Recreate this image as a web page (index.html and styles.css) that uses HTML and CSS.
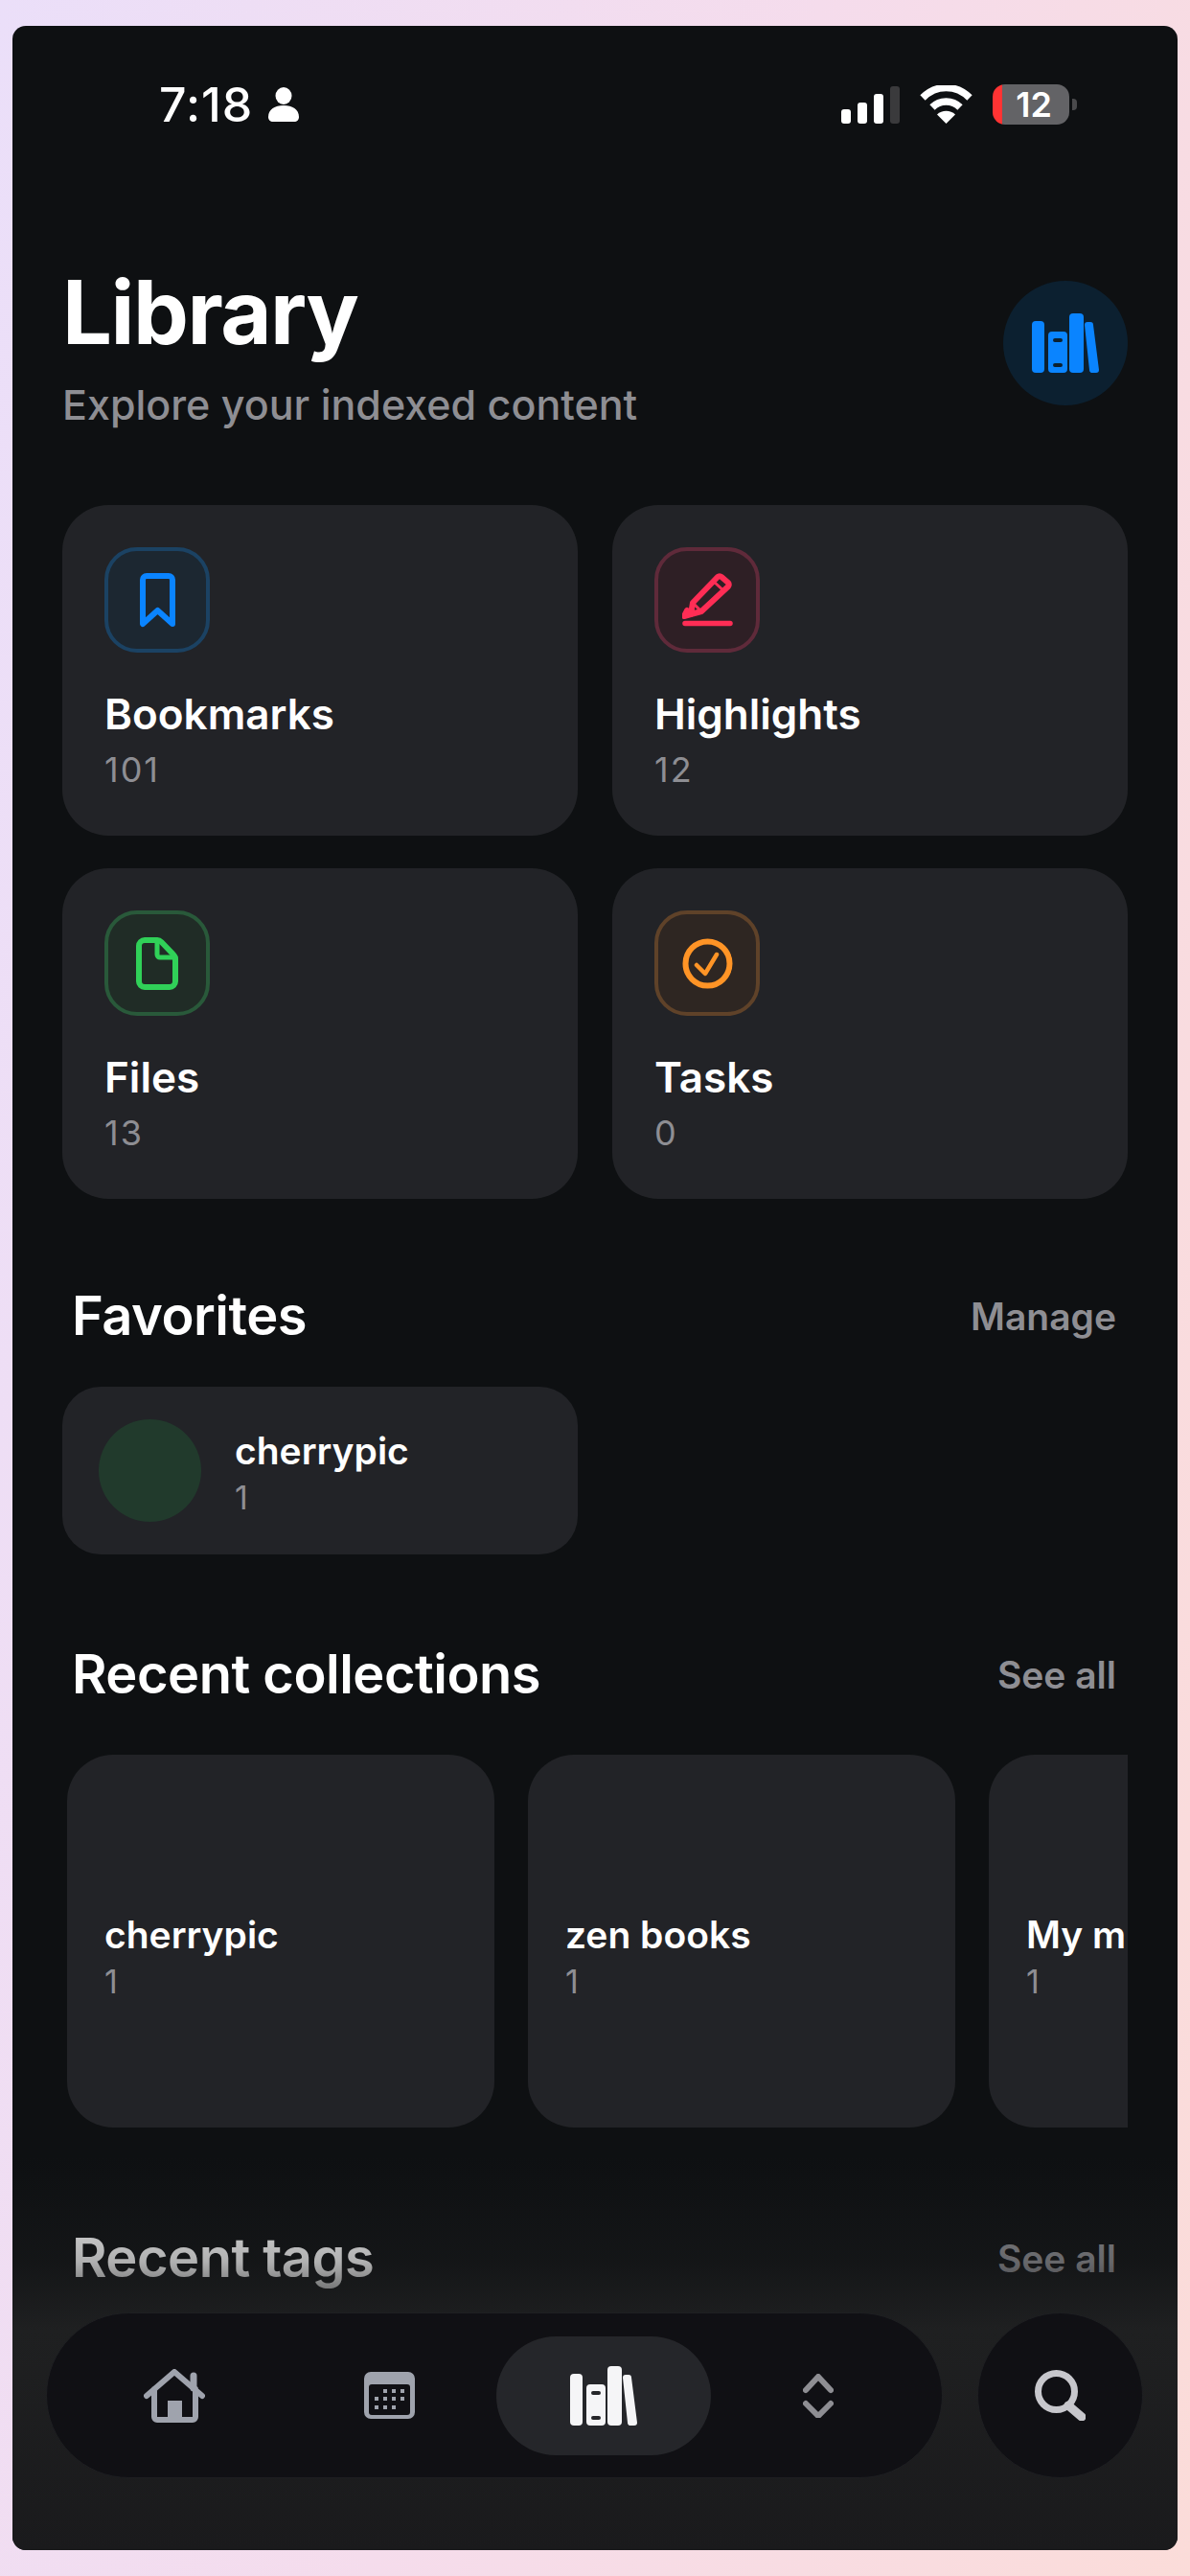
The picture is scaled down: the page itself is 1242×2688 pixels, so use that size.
FILE: index.html
```html
<!DOCTYPE html>
<html lang="en">
<head>
  <meta charset="UTF-8">
  <meta name="viewport" content="width=device-width, initial-scale=1.0">
  <title>Library</title>
  <link rel="stylesheet" href="styles.css">
</head>
<body>
  <div class="phone">

    <div class="status-bar">
      <div class="status-left">
        <span class="clock">7:18</span>
        <svg class="person" viewBox="0 0 34 36"><ellipse cx="17" cy="9" rx="8.5" ry="9"/><path d="M1 31c0-8 7-12 16-12s16 4 16 12c0 3-2 5-5 5H6c-3 0-5-2-5-5z"/></svg>
      </div>
      <div class="status-right">
        <svg class="signal" viewBox="0 0 61 39">
          <rect x="0" y="24" width="10" height="15" rx="3"/>
          <rect x="17" y="17" width="10" height="22" rx="3"/>
          <rect x="34" y="8" width="10" height="31" rx="3"/>
          <rect class="signal-off" x="51" y="0" width="10" height="39" rx="3"/>
        </svg>
        <svg class="wifi" viewBox="0 0 55 40">
          <path class="wifi-arc" d="M3 13C17-1 38-1 52 13"/>
          <path class="wifi-arc" d="M13 23C21 15 34 15 42 23"/>
          <path d="M27.5 40L18 30.500C23 25.500 32 25.500 37 30.500Z"/>
        </svg>
        <div class="battery">
          <div class="battery-body"><span class="battery-num">12</span></div>
          <div class="battery-nub"></div>
        </div>
      </div>
    </div>

    <div class="content">
      <div class="page-head">
        <div>
          <h1>Library</h1>
          <p class="subtitle">Explore your indexed content</p>
        </div>
        <div class="head-badge">
          <svg class="books" viewBox="0 0 70 62"><use href="#books"/></svg>
        </div>
      </div>

      <div class="stat-grid">
        <div class="stat-card">
          <div class="tile tile-blue">
            <svg class="bookmark-icon" viewBox="0 0 37 57"><path d="M3 53V7a4 4 0 0 1 4-4h23a4 4 0 0 1 4 4v46L18.500 39z"/></svg>
          </div>
          <div class="stat-title">Bookmarks</div>
          <div class="stat-count">101</div>
        </div>
        <div class="stat-card">
          <div class="tile tile-red">
            <svg class="pen-icon" viewBox="0 0 53 56">
              <path d="M37 4a3 3 0 0 1 4 0l7 6a3 3 0 0 1 0 4L20 40l-11 3 2-12z"/>
              <path d="M33 9l11 10M11 31l9 9" stroke-width="3"/>
              <path d="M2 45l7-2-4-4z"/>
              <path d="M3 52.500h47" stroke-width="5.500"/>
            </svg>
          </div>
          <div class="stat-title">Highlights</div>
          <div class="stat-count">12</div>
        </div>
        <div class="stat-card">
          <div class="tile tile-green">
            <svg class="file-icon" viewBox="0 0 44 55">
              <path d="M9 3h13c2 0 3 .5 4.500 2L38 17c2 2 3 3 3 5v24a6 6 0 0 1-6 6H9a6 6 0 0 1-6-6V9a6 6 0 0 1 6-6z"/>
              <path d="M22 3v15a3 3 0 0 0 3 3h16" stroke-width="5"/>
            </svg>
          </div>
          <div class="stat-title">Files</div>
          <div class="stat-count">13</div>
        </div>
        <div class="stat-card">
          <div class="tile tile-orange">
            <svg class="task-icon" viewBox="0 0 53 53">
              <circle cx="26.500" cy="26.500" r="23"/>
              <path d="M15 28l9 9 12-20" stroke-width="4.500"/>
            </svg>
          </div>
          <div class="stat-title">Tasks</div>
          <div class="stat-count">0</div>
        </div>
      </div>

      <div class="section-head section-favorites">
        <h2>Favorites</h2>
        <span class="section-link">Manage</span>
      </div>
      <div class="fav-card">
        <div class="fav-dot"></div>
        <div class="fav-text">
          <div class="item-name">cherrypic</div>
          <div class="item-count">1</div>
        </div>
      </div>

      <div class="section-head section-collections">
        <h2>Recent collections</h2>
        <span class="section-link">See all</span>
      </div>
      <div class="collection-row">
        <div class="collection-card">
          <div class="item-name">cherrypic</div>
          <div class="item-count">1</div>
        </div>
        <div class="collection-card">
          <div class="item-name">zen books</div>
          <div class="item-count">1</div>
        </div>
        <div class="collection-card">
          <div class="item-name">My mu</div>
          <div class="item-count">1</div>
        </div>
      </div>

      <div class="section-head section-tags">
        <h2>Recent tags</h2>
        <span class="section-link">See all</span>
      </div>
    </div>

    <!-- floating tab bar sits over the scrolled content -->
    <div class="dock">
      <div class="tab-bar">
        <div class="tab">
          <svg class="home-icon" viewBox="0 0 64 56">
            <path d="M3 28L32 3l29 25M11 21v29a3 3 0 0 0 3 3h37a3 3 0 0 0 3-3V21"/>
            <path d="M52 7v13" stroke-width="7"/>
            <rect class="icon-fill" x="25" y="33" width="15" height="20"/>
          </svg>
        </div>
        <div class="tab">
          <svg class="calendar-icon" viewBox="0 0 53 49">
            <path fill-rule="evenodd" d="M7 0h39a7 7 0 0 1 7 7v35a7 7 0 0 1-7 7H7a7 7 0 0 1-7-7V7a7 7 0 0 1 7-7zM8 13a3 3 0 0 0-3 3v26a3 3 0 0 0 3 3h37a3 3 0 0 0 3-3V16a3 3 0 0 0-3-3z"/>
            <rect x="20" y="18" width="4" height="4"/><rect x="29" y="18" width="4" height="4"/><rect x="38" y="18" width="4" height="4"/>
            <rect x="11" y="26" width="4" height="4"/><rect x="20" y="26" width="4" height="4"/><rect x="29" y="26" width="4" height="4"/><rect x="38" y="26" width="4" height="4"/>
            <rect x="11" y="35" width="4" height="4"/><rect x="20" y="35" width="4" height="4"/><rect x="29" y="35" width="4" height="4"/>
          </svg>
        </div>
        <div class="tab tab-active">
          <svg class="books" viewBox="0 0 70 62"><use href="#books"/></svg>
        </div>
        <div class="tab">
          <svg class="chevrons-icon" viewBox="0 0 32 46">
            <path d="M3 17L16 3l13 14M3 31l13 13 13-13"/>
          </svg>
        </div>
      </div>
      <div class="search-btn">
        <svg class="search-icon" viewBox="0 0 53 53">
          <circle cx="22.500" cy="22.500" r="19"/>
          <path d="M35 37l14 12" stroke-width="9"/>
        </svg>
      </div>
    </div>
  </div>

  <svg class="sprites" width="0" height="0">
    <symbol id="books" viewBox="0 0 70 62">
      <rect x="0" y="8" width="13" height="54" rx="4"/>
      <path fill-rule="evenodd" d="M21 19h12a4 4 0 0 1 4 4v35a4 4 0 0 1-4 4H21a4 4 0 0 1-4-4V23a4 4 0 0 1 4-4zM24 26a2 2 0 0 0 0 4h6a2 2 0 0 0 0-4zM24 52a2 2 0 0 0 0 4h6a2 2 0 0 0 0-4z"/>
      <rect x="39" y="0" width="15" height="62" rx="4"/>
      <path d="M55 12a3 3 0 0 1 3-3h3a3 3 0 0 1 3 3l6 47a3 3 0 0 1-3 3h-3a3 3 0 0 1-4-3z"/>
    </symbol>
  </svg>
</body>
</html>
```
FILE: styles.css
```css
* {
    box-sizing: border-box;
}

body {
    margin: 0;
    width: 1242px;
    height: 2688px;
    padding: 27px 13px;
    overflow: hidden;
    font-family: Inter, "Noto Sans", sans-serif;
    background: linear-gradient(100deg, #ebdff9 0%, #f5dcec 50%, #fbdcd9 100%);
}

.phone {
    position: relative;
    height: 2634px;
    border-radius: 14px;
    overflow: hidden;
    background-color: #0e1012;
    color: #fff;
}

.sprites {
    position: absolute;
}

/* status bar */
.status-bar {
    display: flex;
    justify-content: space-between;
    align-items: center;
    height: 42px;
    margin-top: 61px;
    padding: 0 105px 0 153px;
}

.status-left {
    display: flex;
    align-items: center;
    gap: 15px;
}

.clock {
    font-size: 50px;
    font-weight: 500;
    line-height: 42px;
    letter-spacing: 1px;
}

.person {
    width: 34px;
    height: 36px;
    fill: #fff;
}

.status-right {
    display: flex;
    align-items: center;
    gap: 21px;
}

.signal {
    width: 61px;
    height: 39px;
    fill: #fff;
}

.signal-off {
    fill: #3a3a3c;
}

.wifi {
    width: 55px;
    height: 40px;
    fill: #fff;
}

.wifi-arc {
    fill: none;
    stroke: #fff;
    stroke-width: 7.5;
}

.battery {
    display: flex;
    align-items: center;
    gap: 3px;
}

.battery-body {
    width: 80px;
    height: 42px;
    border-radius: 13px;
    overflow: hidden;
    background: linear-gradient(90deg, #ff3333 10px, #636366 10px);
    text-align: center;
    padding-left: 6px;
}

.battery-num {
    font-size: 36px;
    font-weight: 600;
    line-height: 42px;
}

.battery-nub {
    width: 5px;
    height: 12px;
    border-radius: 0 4px 4px 0;
    background-color: #4a4a4c;
}

/* page header */
.content {
    padding: 0 52px;
}

.page-head {
    display: flex;
    justify-content: space-between;
    align-items: flex-start;
    margin-top: 140px;
}

h1 {
    margin: 0;
    font-size: 92px;
    font-weight: 700;
    line-height: 112px;
    letter-spacing: -1.5px;
}

.subtitle {
    margin: 16px 0 0;
    font-size: 43px;
    font-weight: 500;
    line-height: 48px;
    color: #8e8e93;
}

.head-badge {
    display: flex;
    justify-content: center;
    align-items: center;
    width: 130px;
    height: 130px;
    margin-top: 23px;
    border-radius: 50%;
    background-color: #0c2030;
    color: #0a84ff;
}

.books {
    width: 70px;
    height: 62px;
    fill: currentColor;
}

/* stat cards */
.stat-grid {
    display: grid;
    grid-template-columns: 538px 538px;
    grid-auto-rows: 345px;
    gap: 34px 36px;
    margin-top: 81px;
}

.stat-card {
    padding: 44px 44px 0;
    border-radius: 48px;
    background-color: #222327;
}

.tile {
    display: flex;
    justify-content: center;
    align-items: center;
    width: 110px;
    height: 110px;
    border: 4px solid;
    border-radius: 34px;
}

.tile svg {
    fill: none;
    stroke: currentColor;
    stroke-width: 6;
    stroke-linecap: round;
    stroke-linejoin: round;
}

.tile-blue {
    color: #0a84ff;
    border-color: #1b4263;
    background-color: #1c2731;
}

.tile-red {
    color: #ff2d55;
    border-color: #5f2a3a;
    background-color: #2e1f25;
}

.tile-green {
    color: #30d158;
    border-color: #29593a;
    background-color: #202c26;
}

.tile-orange {
    color: #ff9426;
    border-color: #5f4229;
    background-color: #2e2622;
}

.bookmark-icon {
    width: 37px;
    height: 57px;
}

.pen-icon {
    width: 53px;
    height: 56px;
}

.file-icon {
    width: 44px;
    height: 55px;
}

.task-icon {
    width: 53px;
    height: 53px;
}

.stat-title {
    margin-top: 38px;
    font-size: 44px;
    font-weight: 600;
    line-height: 52px;
}

.stat-count {
    margin-top: 9px;
    font-size: 36px;
    line-height: 46px;
    letter-spacing: 2px;
    color: #8e8e93;
}

/* sections */
.section-head {
    display: flex;
    justify-content: space-between;
    align-items: center;
    padding: 0 12px 0 10px;
}

h2 {
    margin: 0;
    font-size: 56px;
    font-weight: 600;
    line-height: 64px;
    letter-spacing: -.5px;
}

.section-link {
    font-size: 39px;
    font-weight: 600;
    color: #8e8e93;
}

.section-favorites {
    margin-top: 90px;
}

.section-collections {
    margin-top: 93px;
}

.section-tags {
    margin-top: 104px;
}

.fav-card {
    display: flex;
    align-items: center;
    gap: 35px;
    width: 538px;
    height: 175px;
    margin-top: 42px;
    padding-left: 38px;
    border-radius: 40px;
    background-color: #222327;
}

.fav-dot {
    width: 107px;
    height: 107px;
    border-radius: 50%;
    background-color: #213a2c;
}

.fav-text {
    padding-top: 6px;
}

.item-name {
    font-size: 39px;
    font-weight: 600;
    line-height: 48px;
}

.item-count {
    margin-top: 2px;
    font-size: 34px;
    line-height: 46px;
    color: #8e8e93;
}

.collection-row {
    display: flex;
    gap: 35px;
    margin-top: 52px;
    padding-left: 5px;
    overflow: hidden;
}

.collection-card {
    flex: 0 0 446px;
    display: flex;
    flex-direction: column;
    justify-content: center;
    height: 389px;
    padding: 34px 39px 0;
    border-radius: 48px;
    background-color: #222327;
}

/* bottom dock */
.dock {
    position: absolute;
    left: 0;
    right: 0;
    bottom: 0;
    height: 411px;
    display: flex;
    align-items: flex-start;
    gap: 36px;
    padding: 163px 36px 0 35px;
    background: linear-gradient(180deg, rgba(31, 32, 33, 0) 0, rgba(31, 32, 33, .35) 110px, #1f2021 182px, #1a1a1c 100%);
}

.tab-bar {
    display: flex;
    align-items: center;
    width: 936px;
    height: 173px;
    padding-left: 21px;
    border: 1px solid #1e1f22;
    border-radius: 87px;
    background-color: #101014;
}

.tab {
    display: flex;
    justify-content: center;
    align-items: center;
    width: 224px;
    height: 124px;
    color: #9fa3ad;
    fill: currentColor;
}

.tab-active {
    border-radius: 62px;
    background-color: #25262a;
    color: #f5f5f7;
}

.home-icon {
    width: 64px;
    height: 56px;
    fill: none;
    stroke: currentColor;
    stroke-width: 6;
    stroke-linecap: round;
    stroke-linejoin: round;
}

.icon-fill {
    fill: currentColor;
    stroke: none;
}

.calendar-icon {
    width: 53px;
    height: 49px;
}

.chevrons-icon {
    width: 32px;
    height: 46px;
    fill: none;
    stroke: #8e8e93;
    stroke-width: 6;
    stroke-linecap: round;
    stroke-linejoin: round;
}

.search-btn {
    display: flex;
    justify-content: center;
    align-items: center;
    width: 173px;
    height: 173px;
    border: 1px solid #1e1f22;
    border-radius: 50%;
    background-color: #101014;
}

.search-icon {
    width: 53px;
    height: 53px;
    fill: none;
    stroke: #c7c7cc;
    stroke-width: 7;
    stroke-linecap: round;
}
```
